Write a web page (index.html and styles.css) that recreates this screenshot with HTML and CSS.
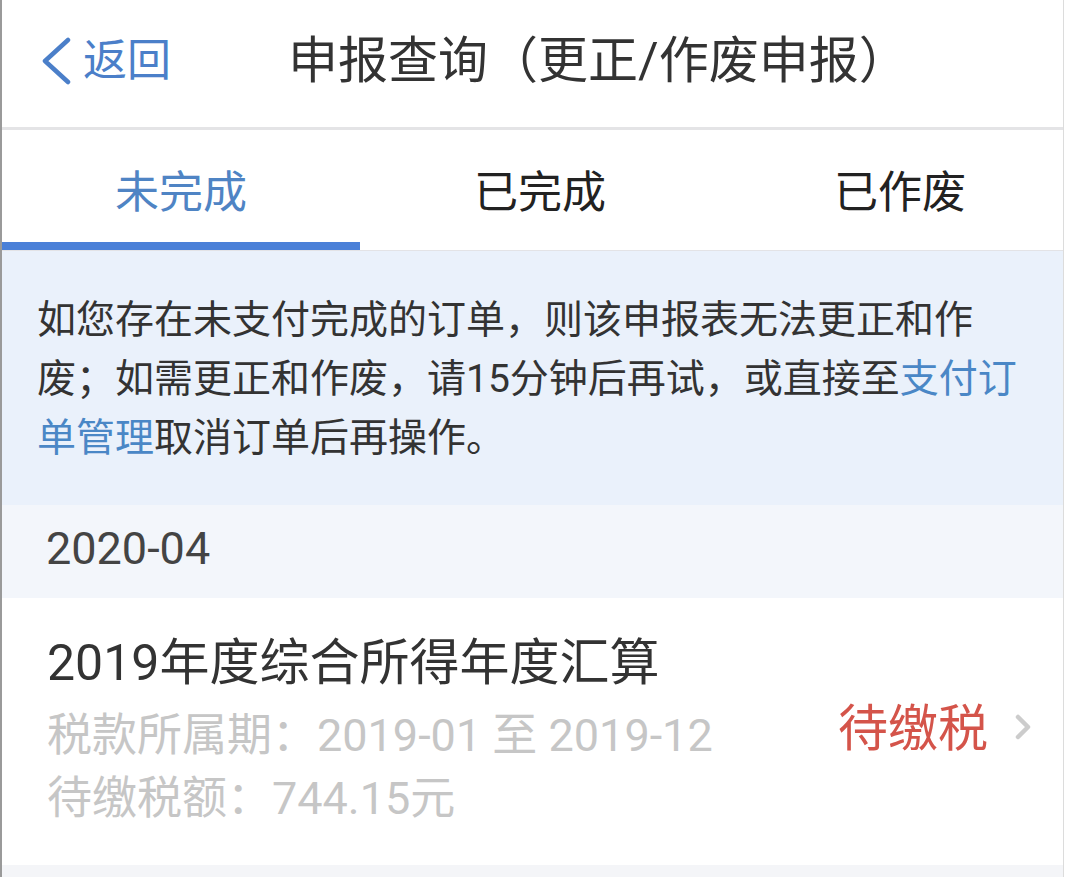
FILE: index.html
```html
<!DOCTYPE html>
<html lang="zh-CN">
<head>
<meta charset="utf-8">
<title>申报查询</title>
<link rel="stylesheet" href="styles.css">
</head>
<body>
<div class="screen">
  <header class="nav">
    <a class="back">
      <svg class="back-icon" viewBox="0 0 30 50" width="30" height="50"><polyline points="27,4 4,25 27,46"/></svg>
      <span class="back-text">返回</span>
    </a>
    <h1 class="title">申报查询（更正/作废申报）</h1>
  </header>
  <nav class="tabs">
    <div class="tab active">未完成</div>
    <div class="tab">已完成</div>
    <div class="tab">已作废</div>
  </nav>
  <p class="notice">如您存在未支付完成的订单，则该申报表无法更正和作废；如需更正和作废，请15分钟后再试，或直接至<span class="link">支付订</span><span class="link">单管理</span>取消订单后再操作。</p>
  <div class="month">2020-04</div>
  <div class="item">
    <div class="item-main">
      <div class="item-title">2019年度综合所得年度汇算</div>
      <div class="item-sub">税款所属期：2019-01 至 2019-12</div>
      <div class="item-sub">待缴税额：744.15元</div>
    </div>
    <div class="status">待缴税</div>
    <svg class="chev" viewBox="0 0 18 28" width="18" height="28"><polyline points="4,4 14,14 4,24"/></svg>
  </div>
</div>
</body>
</html>
```
FILE: styles.css
```css
* { box-sizing: border-box; }
html, body {
  margin: 0;
  padding: 0;
  background: #ffffff;
}
body {
  width: 1072px;
  height: 877px;
  overflow: hidden;
  font-family: Roboto, "Noto Sans CJK SC", sans-serif;
  color: #333333;
}
.screen {
  width: 1064px;
  height: 877px;
  border-left: 2px solid #9a9a9a;
  border-right: 1px solid #dcdcdc;
  background: #f4f5f8;
  overflow: hidden;
}
.nav {
  height: 130px;
  background: #ffffff;
  border-bottom: 3px solid #e4e4e6;
  display: flex;
  align-items: center;
  padding: 0 0 6px 39px;
}
.back {
  display: flex;
  align-items: center;
  color: #4b7fc9;
}
.back-icon {
  display: block;
  fill: none;
  stroke: #4b7fc9;
  stroke-width: 4.5;
  stroke-linecap: round;
  stroke-linejoin: round;
}
.back-text {
  margin-left: 12px;
  font-size: 44px;
  line-height: 60px;
}
.title {
  margin: 0 0 0 117px;
  font-size: 50px;
  font-weight: 400;
  line-height: 60px;
  color: #333333;
}
.tabs {
  position: relative;
  height: 121px;
  background: #ffffff;
  border-bottom: 1px solid #e3e3e6;
  display: grid;
  grid-template-columns: 358px 360px 360px;
}
.tab {
  position: relative;
  display: flex;
  align-items: center;
  justify-content: center;
  padding-bottom: 2px;
  font-size: 44px;
  color: #222222;
}
.tab.active {
  color: #4f84c4;
}
.tab.active::after {
  content: "";
  position: absolute;
  left: 0;
  right: 0;
  bottom: 0;
  height: 8px;
  background: #4a80d8;
}
.notice {
  margin: 0;
  background: #eaf1fb;
  padding: 40px 40px 37px 35px;
  font-size: 39px;
  line-height: 59px;
  color: #333333;
}
.link {
  color: #4a87c6;
}
.month {
  height: 93px;
  display: flex;
  align-items: center;
  padding: 0 0 6px 44px;
  background: #f3f6fb;
  font-size: 45px;
  color: #444444;
}
.item {
  height: 267px;
  background: #ffffff;
  display: flex;
  align-items: center;
  padding: 0 31px 0 45px;
}
.item-main {
  flex: 1;
}
.item-title {
  font-size: 50px;
  line-height: 60px;
  color: #333333;
  margin-bottom: 6px;
  padding-bottom: 4px;
}
.item-sub {
  font-size: 45px;
  line-height: 65px;
  color: #c6c6c6;
}
.item-sub + .item-sub {
  margin-top: -2px;
}
.status {
  font-size: 50px;
  line-height: 60px;
  color: #d4544a;
  margin-bottom: 6px;
}
.chev {
  display: block;
  margin-left: 26px;
  margin-bottom: 10px;
  fill: none;
  stroke: #cccccc;
  stroke-width: 4.5;
  stroke-linecap: round;
  stroke-linejoin: round;
}
```
